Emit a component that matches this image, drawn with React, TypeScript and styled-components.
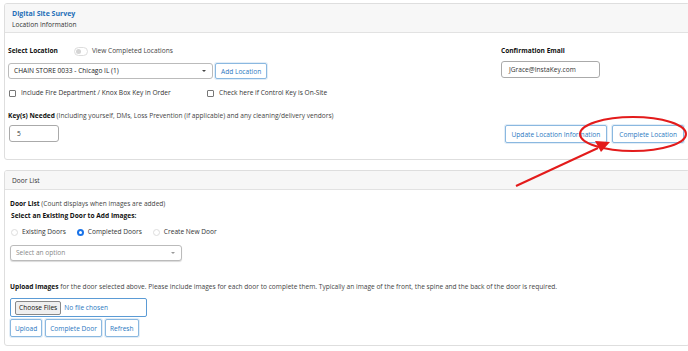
import React from 'react';
import styled, { createGlobalStyle } from 'styled-components';

const GlobalStyle = createGlobalStyle`
  html, body {
    margin: 0;
    background: #fff;
    overflow: hidden;
  }
  body {
    font-family: "Open Sans", "Noto Sans", sans-serif;
    font-size: 6.6px;
    line-height: 10px;
    color: #222;
  }
`;

const Page = styled.div`
  position: relative;
  width: 688px;
  height: 351px;
  padding: 3px 0 0 4px;
  box-sizing: border-box;
  display: flex;
  flex-direction: column;
  gap: 10px;
`;

const Card = styled.div`
  border: 1px solid #dedede;
  border-radius: 3px;
  margin-right: -2px;
  background: #fff;
  overflow: hidden;
`;

const CardHeader = styled.div<{ $pad: string }>`
  background: #f7f7f7;
  border-bottom: 1px solid #e2e2e2;
  padding: ${(p) => p.$pad};
  display: flex;
  flex-direction: column;
  gap: 1px;
  color: #333;
`;

const Title = styled.div`
  color: #1f6fb8;
  font-weight: 700;
  font-size: 7px;
`;

const Body = styled.div`
  display: flex;
  padding: 13px 5px 17px 3px;
`;

const LeftCol = styled.div`
  width: 493px;
  display: flex;
  flex-direction: column;
`;

const RightCol = styled.div`
  flex: 1;
  display: flex;
  flex-direction: column;
  justify-content: space-between;
`;

const Row = styled.div<{ $gap?: number; $mt?: number }>`
  display: flex;
  align-items: center;
  gap: ${(p) => p.$gap ?? 4}px;
  margin-top: ${(p) => p.$mt ?? 0}px;
`;

const Label = styled.span`
  font-weight: 700;
  color: #111;
`;

const Muted = styled.span`
  color: #444;
  font-weight: 400;
`;

const Switch = styled.span`
  display: inline-block;
  width: 12px;
  height: 7px;
  border: 1px solid #ddd;
  border-radius: 5px;
  position: relative;
  margin: 0 4px 0 16px;
  &::after {
    content: '';
    position: absolute;
    left: 1px;
    top: 1px;
    width: 5px;
    height: 5px;
    border-radius: 50%;
    background: #d4d4d4;
  }
`;

const SelectBox = styled.div<{ $w: number; $placeholder?: boolean }>`
  width: ${(p) => p.$w}px;
  height: 16px;
  box-sizing: border-box;
  border: 1px solid #bbb;
  border-radius: 3px;
  display: flex;
  align-items: center;
  justify-content: space-between;
  padding: 0 6px 0 5px;
  color: ${(p) => (p.$placeholder ? '#888' : '#222')};
  background: #fff;
  box-shadow: ${(p) => (p.$placeholder ? '0 1px 1px rgba(0,0,0,0.15)' : 'none')};
  &::after {
    content: '';
    border-left: 2px solid transparent;
    border-right: 2px solid transparent;
    border-top: 2px solid ${(p) => (p.$placeholder ? '#999' : '#444')};
  }
`;

const Button = styled.button<{ $h?: number; $px?: number }>`
  font-family: inherit;
  font-size: 6.6px;
  white-space: nowrap;
  color: #2a78bf;
  background: #fff;
  border: 1px solid #8ab8e0;
  border-radius: 2px;
  height: ${(p) => p.$h ?? 17}px;
  padding: 0 ${(p) => p.$px ?? 6}px;
  cursor: pointer;
  box-shadow: 0 0 0 1px rgba(138, 184, 224, 0.25);
`;

const CheckLabel = styled.label<{ $w?: number }>`
  display: flex;
  align-items: center;
  gap: 5px;
  width: ${(p) => (p.$w ? `${p.$w}px` : 'auto')};
  color: #333;
`;

const Box = styled.span`
  width: 5px;
  height: 5px;
  border: 1px solid #777;
  border-radius: 1px;
  margin-left: 1px;
`;

const TextInput = styled.div<{ $w: number }>`
  width: ${(p) => p.$w}px;
  height: 17px;
  box-sizing: border-box;
  border: 1px solid #aaa;
  border-radius: 3px;
  padding: 0 7px;
  display: flex;
  align-items: center;
  color: #333;
`;

const ButtonRow = styled.div`
  display: flex;
  justify-content: flex-end;
  gap: 5px;
  margin-bottom: -1px;
`;

const DoorBody = styled.div`
  padding: 9px 6px 8px 5px;
  display: flex;
  flex-direction: column;
`;

const Radio = styled.span<{ $on?: boolean }>`
  width: 7px;
  height: 7px;
  border-radius: 50%;
  box-sizing: border-box;
  border: ${(p) => (p.$on ? '2px solid #1a73e8' : '1px solid #ddd')};
  background: #fff;
  margin-left: 1px;
`;

const RadioLabel = styled.label`
  display: flex;
  align-items: center;
  gap: 4px;
  color: #333;
  margin-right: 10px;
`;

const FileInput = styled.div`
  width: 137px;
  height: 19px;
  box-sizing: border-box;
  border: 1px solid #5b9bd5;
  border-radius: 2px;
  display: flex;
  align-items: center;
  padding-left: 4px;
  gap: 3px;
  color: #2a78bf;
`;

const FileButton = styled.span`
  background: #efefef;
  border: 1px solid #888;
  border-radius: 2px;
  padding: 1px 3px;
  color: #111;
`;

const Overlay = styled.svg`
  position: absolute;
  left: 0;
  top: 0;
  pointer-events: none;
`;

const App: React.FC = () => (
  <>
    <GlobalStyle />
    <Page>
      <Card>
        <CardHeader $pad="5px 7px 2px">
          <Title>Digital Site Survey</Title>
          <span>Location Information</span>
        </CardHeader>
        <Body>
          <LeftCol>
            <Row $gap={0}>
              <Label>Select Location</Label>
              <Switch />
              <Muted>View Completed Locations</Muted>
            </Row>
            <Row $gap={2} $mt={7}>
              <SelectBox $w={205}>CHAIN STORE 0033 - Chicago IL (1)</SelectBox>
              <Button $h={16} $px={5}>Add Location</Button>
            </Row>
            <Row $gap={0} $mt={9}>
              <CheckLabel $w={198}>
                <Box />
                Include Fire Department / Knox Box Key in Order
              </CheckLabel>
              <CheckLabel>
                <Box />
                Check here if Control Key is On-Site
              </CheckLabel>
            </Row>
            <Row $mt={13}>
              <span>
                <Label>Key(s) Needed</Label> <Muted>(Including yourself, DMs, Loss Prevention (if applicable) and any cleaning/delivery vendors)</Muted>
              </span>
            </Row>
            <Row $mt={4} style={{ marginLeft: 1 }}>
              <TextInput $w={50}>5</TextInput>
            </Row>
          </LeftCol>
          <RightCol>
            <div>
              <Label>Confirmation Email</Label>
              <Row $mt={5}>
                <TextInput $w={99}>JGrace@InstaKey.com</TextInput>
              </Row>
            </div>
            <ButtonRow>
              <Button $h={18}>Update Location Information</Button>
              <Button $h={18}>Complete Location</Button>
            </ButtonRow>
          </RightCol>
        </Body>
      </Card>

      <Card>
        <CardHeader $pad="5px 7px 3px">
          <span>Door List</span>
        </CardHeader>
        <DoorBody>
          <span>
            <Label>Door List</Label> <Muted>(Count displays when images are added)</Muted>
          </span>
          <Row $mt={2}>
            <Label style={{ marginLeft: 1 }}>Select an Existing Door to Add Images:</Label>
          </Row>
          <Row $mt={6} $gap={0}>
            <RadioLabel>
              <Radio />
              Existing Doors
            </RadioLabel>
            <RadioLabel>
              <Radio $on />
              Completed Doors
            </RadioLabel>
            <RadioLabel>
              <Radio />
              Create New Door
            </RadioLabel>
          </Row>
          <Row $mt={8}>
            <SelectBox $w={172} $placeholder>Select an option</SelectBox>
          </Row>
          <Row $mt={21}>
            <span>
              <Label>Upload images</Label>{' '}
              <Muted>
                for the door selected above. Please include images for each door to complete them. Typically an image of the front, the spine and the back of the door is required.
              </Muted>
            </span>
          </Row>
          <Row $mt={6}>
            <FileInput>
              <FileButton>Choose Files</FileButton>
              No file chosen
            </FileInput>
          </Row>
          <Row $mt={2} $gap={3}>
            <Button $h={18} $px={4}>Upload</Button>
            <Button $h={18} $px={4}>Complete Door</Button>
            <Button $h={18} $px={4}>Refresh</Button>
          </Row>
        </DoorBody>
      </Card>

      <Overlay width="688" height="351" viewBox="0 0 688 351">
        <ellipse cx="633" cy="134" rx="53" ry="17" fill="none" stroke="#e31b1b" strokeWidth="2" />
        <line x1="516" y1="186" x2="598" y2="148" stroke="#e31b1b" strokeWidth="2" />
        <polygon points="610,142 595,141 601,152" fill="#e31b1b" />
      </Overlay>
    </Page>
  </>
);

export default App;
